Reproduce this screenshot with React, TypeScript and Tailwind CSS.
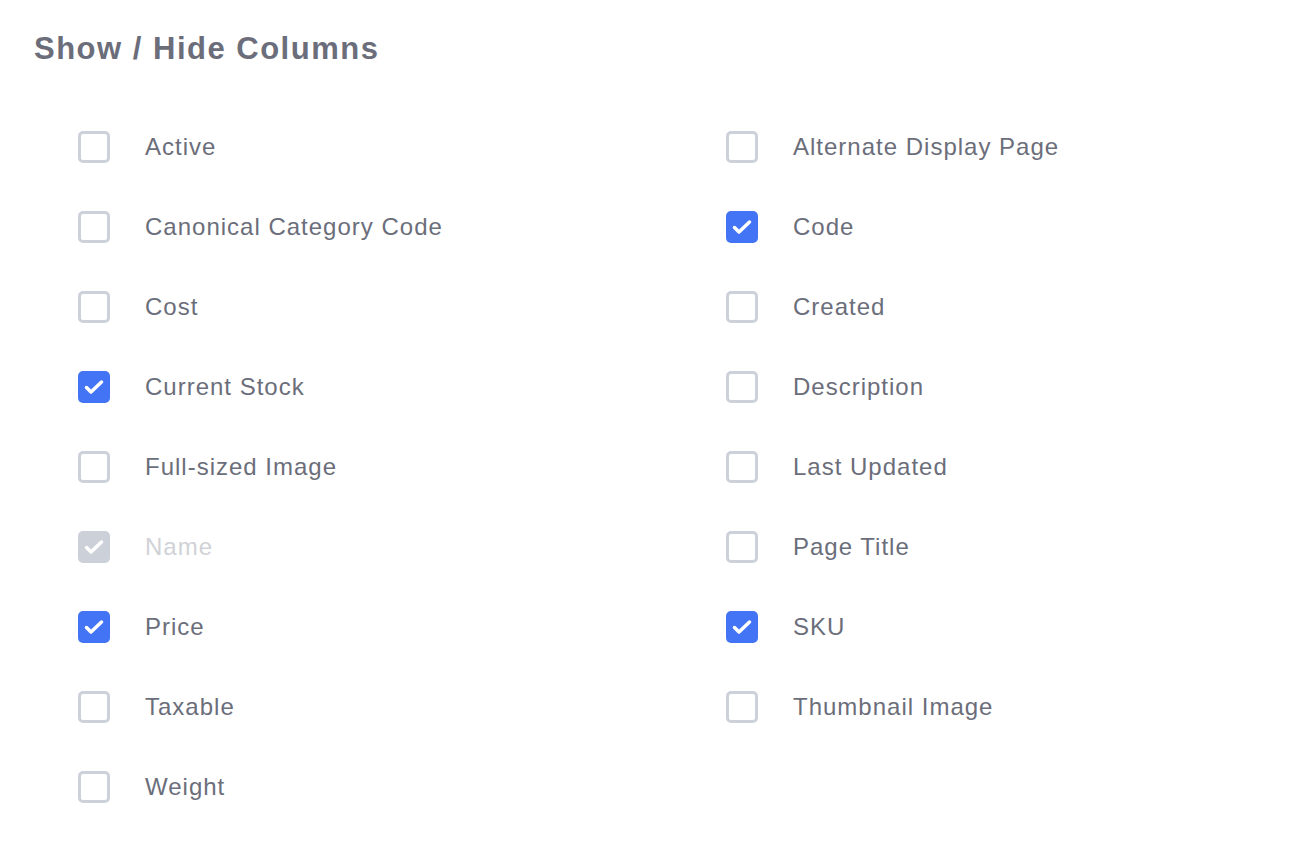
import React, { useState } from 'react';

type Column = {
    key: string;
    label: string;
    checked: boolean;
    disabled?: boolean;
};

const initialLeft: Column[] = [
    { key: 'active', label: 'Active', checked: false },
    { key: 'canonical', label: 'Canonical Category Code', checked: false },
    { key: 'cost', label: 'Cost', checked: false },
    { key: 'stock', label: 'Current Stock', checked: true },
    { key: 'image', label: 'Full-sized Image', checked: false },
    { key: 'name', label: 'Name', checked: true, disabled: true },
    { key: 'price', label: 'Price', checked: true },
    { key: 'taxable', label: 'Taxable', checked: false },
    { key: 'weight', label: 'Weight', checked: false },
];

const initialRight: Column[] = [
    { key: 'altpage', label: 'Alternate Display Page', checked: false },
    { key: 'code', label: 'Code', checked: true },
    { key: 'created', label: 'Created', checked: false },
    { key: 'description', label: 'Description', checked: false },
    { key: 'updated', label: 'Last Updated', checked: false },
    { key: 'title', label: 'Page Title', checked: false },
    { key: 'sku', label: 'SKU', checked: true },
    { key: 'thumb', label: 'Thumbnail Image', checked: false },
];

const CheckRow: React.FC<{ column: Column; onToggle: () => void }> = ({ column, onToggle }) => {
    const { checked, disabled, label } = column;

    let box = 'border-[3px] border-[#cdd1d9] bg-white';
    if (checked && disabled) box = 'bg-[#cbd0d9]';
    else if (checked) box = 'bg-[#4374f5]';

    return (
        <label className={`flex items-center h-[80px] ${disabled ? 'cursor-default' : 'cursor-pointer'}`}>
            <button
                type="button"
                onClick={onToggle}
                disabled={disabled}
                className={`w-8 h-8 rounded-[5px] flex items-center justify-center shrink-0 ${box}`}
            >
                {checked && (
                    <svg className="w-6 h-6" viewBox="0 0 24 24" fill="none" stroke="white" strokeWidth={3.5} strokeLinecap="round" strokeLinejoin="round">
                        <path d="M4.5 12.5l4.5 4.5L19.5 7" />
                    </svg>
                )}
            </button>
            <span className={`ml-[35px] text-[24px] tracking-[1px] ${disabled ? 'text-[#d0d2d7]' : 'text-[#6b6e7a]'}`}>
                {label}
            </span>
        </label>
    );
};

export default function App() {
    const [left, setLeft] = useState(initialLeft);
    const [right, setRight] = useState(initialRight);

    const toggle = (list: Column[], set: (c: Column[]) => void, key: string) =>
        set(list.map(c => (c.key === key && !c.disabled ? { ...c, checked: !c.checked } : c)));

    return (
        <div className="min-h-screen bg-white px-[34px] pt-[29px] font-['Liberation_Sans',Arial,sans-serif]">
            <h2 className="text-[31px] leading-[40px] font-bold tracking-[1.5px] text-[#6b6e7a]">Show / Hide Columns</h2>
            <div className="mt-[38px] pl-[44px] grid grid-cols-[648px_1fr]">
                <div className="flex flex-col">
                    {left.map(c => (
                        <CheckRow key={c.key} column={c} onToggle={() => toggle(left, setLeft, c.key)} />
                    ))}
                </div>
                <div className="flex flex-col">
                    {right.map(c => (
                        <CheckRow key={c.key} column={c} onToggle={() => toggle(right, setRight, c.key)} />
                    ))}
                </div>
            </div>
        </div>
    );
}
